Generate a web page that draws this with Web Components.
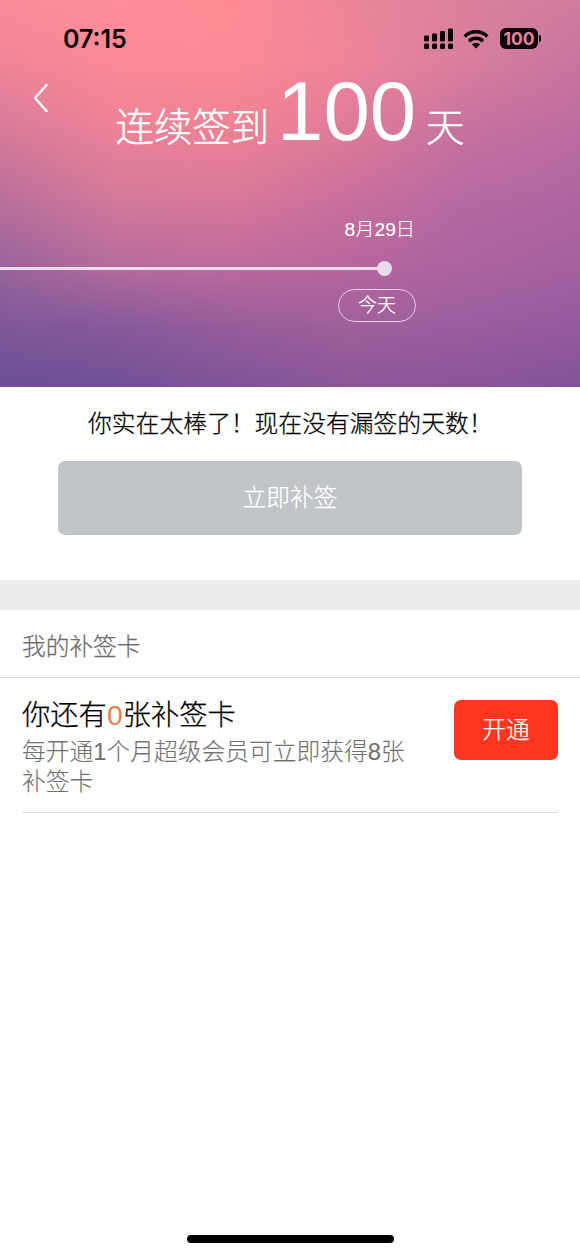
<!DOCTYPE html>
<html lang="zh-CN">
<head>
<meta charset="utf-8">
<title>补签</title>
<style>
html,body{margin:0;background:#fff}
body{font-family:"Liberation Sans","Noto Sans CJK SC",sans-serif;font-weight:300;-webkit-text-stroke:.25px currentColor}
</style>
</head>
<body>
<checkin-page></checkin-page>
<script>
const define = (name, html, extra) => customElements.define(name, class extends HTMLElement {
  constructor() {
    super();
    this.attachShadow({mode: "open"}).innerHTML = html;
    if (extra) extra(this.shadowRoot);
  }
});

define("status-bar", `<style>
:host{display:flex;height:76px;box-sizing:border-box;padding:1px 39px 0 63px;align-items:center;justify-content:space-between;color:#0b0508;-webkit-text-stroke:0}
time{font:600 25px/30px Inter,sans-serif;letter-spacing:0}
svg{display:block}
.icons{display:flex;align-items:center}
.bat{position:relative;display:flex;align-items:center}
.body{width:38px;height:21px;border-radius:6px;background:#0b0508;color:#e5839f;font:700 17.5px/21px Inter,sans-serif;letter-spacing:-.1px;text-align:center}
.cap{width:2px;height:7px;border-radius:0 2px 2px 0;background:#0b0508;margin-left:1px}
</style><time>07:15</time>
<div class="icons">
<svg width="31" height="22" viewBox="0 0 31 22" fill="currentColor" style="margin-right:9px"><rect x="1" y="7.5" width="5" height="6" rx="1.3"/><rect x="9" y="5.5" width="5" height="8" rx="1.3"/><rect x="17" y="3" width="5" height="10.5" rx="1.3"/><rect x="25" y="0.5" width="5" height="13" rx="1.3"/><rect x="1" y="15.5" width="5" height="5.5" rx="1.3"/><rect x="9" y="15.5" width="5" height="5.5" rx="1.3"/><rect x="17" y="15.5" width="5" height="5.5" rx="1.3"/><rect x="25" y="15.5" width="5" height="5.5" rx="1.3"/></svg>
<svg width="26" height="20" viewBox="0 0 26 20" style="margin-right:11px"><g fill="none" stroke="currentColor" stroke-width="3.5"><path d="M1.6 7.4C8 1.2 18 1.2 24.4 7.4"/><path d="M6 12.2C10 8.4 16 8.4 20 12.2"/></g><path fill="currentColor" d="M13 19.5L8.8 15.3Q13 12.1 17.2 15.3Z"/></svg>
<div class="bat"><div class="body">100</div><div class="cap"></div></div>
</div>`);

define("streak-title", `<style>
:host{display:grid;grid-template-columns:60px 1fr 60px;height:84px;color:#fff}
svg{display:block;margin:7px 0 0 33px}
h1{margin:-5px 0 0;font-size:38.4px;font-weight:300;line-height:84px;height:84px;display:flex;justify-content:center;align-items:baseline;white-space:nowrap;-webkit-text-stroke:.4px currentColor}
.n{font-size:83.3px;font-weight:400;margin:0 10px 0 8px;position:relative;top:-1px;-webkit-text-stroke:0}
</style><svg width="16" height="30" viewBox="0 0 16 30"><path d="M13.5 2L2 15L13.5 28" fill="none" stroke="currentColor" stroke-width="2.5" stroke-linejoin="round" stroke-linecap="round"/></svg>
<h1><span>连续签到</span><span class="n"><slot></slot></span><span>天</span></h1>`);

define("streak-timeline", `<style>
:host{display:grid;grid-template-columns:392px;justify-items:end;color:#fff}
.date{font-size:19.2px;line-height:26px;margin-right:-23px;-webkit-text-stroke:.1px}
.line{display:flex;align-items:center;width:392px;margin-top:18px}
.line i{flex:1;height:3px;background:#f2d9ee}
.line b{width:15px;height:15px;border-radius:50%;background:#eadbea}
.today{width:78px;height:33px;box-sizing:border-box;border:1.5px solid #eec9ea;border-radius:17px;margin:13px -24px 0 0;text-align:center;font-size:19px;line-height:32px}
</style><div class="date"><slot></slot></div><div class="line"><i></i><b></b></div><div class="today">今天</div>`);

// Bilinear colour mesh: each row is a horizontal gradient that fades into the next one.
const rows = [
 [0,  ["#f98b97","#fd8e98","#ff8b94","#ec8799","#da829c","#d07c9f"]],
 [65, ["#ef8697","#fb8995","#fc8993","#ee869a","#d87e9e","#c8759f"]],
 [130,["#d67b9a","#ec8397","#ee8295","#de7b98","#c672a0","#bb6ca0"]],
 [200,["#b96f9b","#d27a9b","#d8799a","#c8709d","#b669a2","#b065a1"]],
 [265,["#9a649b","#b66c9c","#be6b9d","#b8669d","#ac64a1","#a460a0"]],
 [325,["#7f589b","#88599b","#985d9b","#a0609c","#9c5d9f","#965a9f"]],
 [387,["#6b4e93","#705096","#7f5399","#8b5698","#8b559a","#835299"]]
];
define("sky-panel", `<style>
:host{display:grid;height:387px;overflow:hidden}
.m,.c{grid-area:1/1;min-width:0}
</style>`, root => {
  rows.forEach(([y, cols], i) => {
    const d = document.createElement("div");
    d.className = "m";
    d.style.background = `linear-gradient(90deg,${cols.join(",")})`;
    if (i) d.style.maskImage = `linear-gradient(180deg,transparent ${rows[i-1][0]}px,#000 ${y}px)`;
    root.append(d);
  });
  const c = document.createElement("div");
  c.className = "c";
  c.style.zIndex = 1;
  c.append(document.createElement("slot"));
  root.append(c);
});

define("makeup-action", `<style>
:host{display:block;height:193px;box-sizing:border-box;padding:20px 58px 0;color:#000}
p{margin:0 0 0 30px;font-size:23.8px;line-height:34px;white-space:nowrap}
button{display:block;width:100%;height:74px;margin-top:20px;border:0;border-radius:7px;background:#c1c4c9;color:#fff;font:inherit;font-size:23.7px;padding:0 0 4px;-webkit-text-stroke:inherit}
</style><p><slot></slot></p><button>立即补签</button>`);

define("card-section", `<style>
:host{display:block;border-top:30px solid #eceeee}
h2{margin:0;height:67px;padding-left:22px;font-size:23.7px;font-weight:300;line-height:74px;color:#6c6c6c;border-bottom:1px solid #dedede}
.row{display:flex;justify-content:space-between;align-items:flex-start;margin:0 22px;height:135px;border-bottom:1px solid #dadada;box-sizing:border-box}
.t{font-size:28.3px;line-height:40px;color:#000;margin-top:17px}
.t em{font-style:normal;color:#ef7b48;-webkit-text-stroke:0}
.d{font-size:23.75px;line-height:30px;color:#707070;width:390px;margin-top:2px;-webkit-text-stroke:.1px}
button{width:104px;height:60px;margin-top:22px;border:0;border-radius:7px;background:#fd371f;color:#fff;font:inherit;font-size:23.7px;padding:0 0 4px;-webkit-text-stroke:inherit}
</style><h2>我的补签卡</h2><div class="row"><div><div class="t">你还有<em>0</em>张补签卡</div><div class="d">每开通1个月超级会员可立即获得8张补签卡</div></div><button>开通</button></div>`);

define("home-indicator", `<style>
:host{display:block;width:207px;height:8px;border-radius:4px;background:#000;margin:auto auto 12px}
</style>`);

define("checkin-page", `<style>
:host{display:flex;flex-direction:column;width:580px;height:1255px;background:#fff;overflow:hidden}
streak-timeline{margin-top:57px}
</style><sky-panel><status-bar></status-bar><streak-title>100</streak-title><streak-timeline>8月29日</streak-timeline></sky-panel>
<makeup-action>你实在太棒了！现在没有漏签的天数！</makeup-action>
<card-section></card-section><home-indicator></home-indicator>`);
</script>
</body>
</html>
